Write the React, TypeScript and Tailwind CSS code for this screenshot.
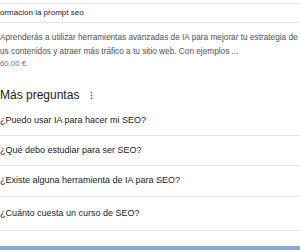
const questions = [
  "¿Puedo usar IA para hacer mi SEO?",
  "¿Qué debo estudiar para ser SEO?",
  "¿Existe alguna herramienta de IA para SEO?",
  "¿Cuánto cuesta un curso de SEO?",
];

const rowHeights = ["h-[30px]", "h-[30px]", "h-[31px]", "h-[34px]"];

export default function App() {
  return (
    <div className="w-[300px] h-[250px] overflow-hidden bg-white flex flex-col font-['Liberation_Sans',Arial,sans-serif]">
      <div className="h-[3px]" />
      <div className="h-[20px] border-y border-[#e3e3e3] flex items-center text-[8px] text-[#202124] leading-none whitespace-nowrap">
        ormacion ia prompt seo
      </div>
      <div className="pt-[8px] text-[8.25px] leading-[14px] text-[#4d5156] whitespace-nowrap">
        <p>Aprenderás a utilizar herramientas avanzadas de IA para mejorar tu estrategia de</p>
        <p>us contenidos y atraer más tráfico a tu sitio web. Con ejemplos ...</p>
        <p className="text-[7.8px] leading-[10px] text-[#70757a]">60,00 €</p>
      </div>
      <div className="mt-[15px] h-[22px] flex items-center text-[12px] text-[#202124]">
        <span>Más preguntas</span>
        <svg viewBox="0 0 4 12" className="ml-[11px] w-[3px] h-[9px]" aria-hidden="true">
          <circle cx="2" cy="2" r="1.2" fill="#70757a" />
          <circle cx="2" cy="6" r="1.2" fill="#70757a" />
          <circle cx="2" cy="10" r="1.2" fill="#70757a" />
        </svg>
      </div>
      <ul>
        {questions.map((q, i) => (
          <li
            key={q}
            className={`flex items-center border-b border-[#e6e6e6] text-[9px] text-[#202124] whitespace-nowrap ${rowHeights[i]}`}
          >
            {q}
          </li>
        ))}
      </ul>
      <div className="flex-1" />
      <div className="h-[4px] bg-[#89aad0]" />
    </div>
  );
}
